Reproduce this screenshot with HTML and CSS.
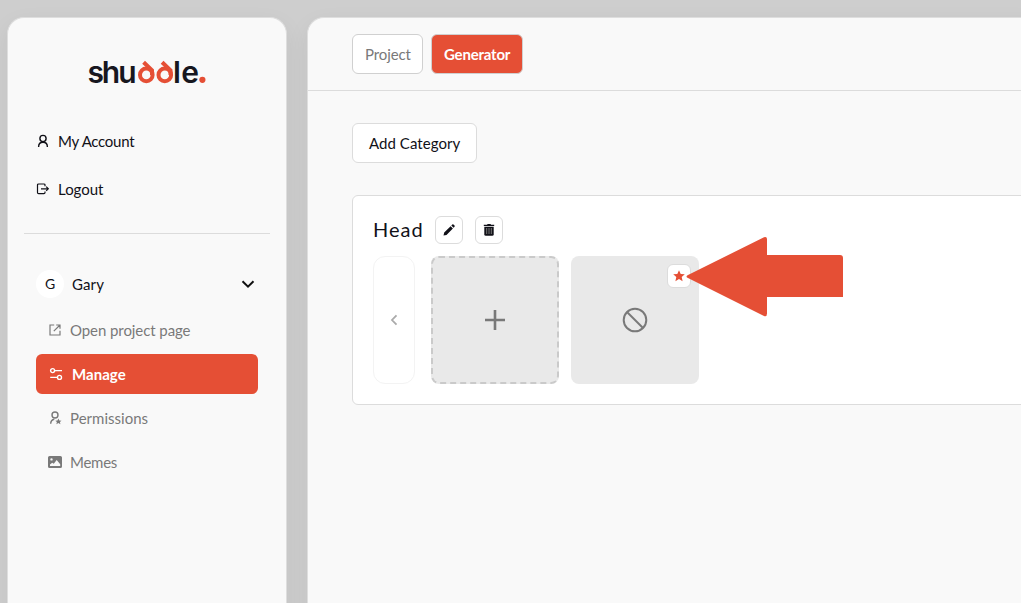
FILE: index.html
```html
<!DOCTYPE html>
<html lang="en">
<head>
<meta charset="utf-8">
<title>shuddle</title>
<link rel="stylesheet" href="styles.css">
</head>
<body>
<div class="app">
  <aside class="sidebar">
    <svg class="logo" width="120" height="38" viewBox="0 -5 120 38">
      <text class="logo-text" x="0.5" y="25" textLength="49">shu</text>
      <g class="logo-accent">
        <circle cx="59.3" cy="16.9" r="6.3"/><path d="M56.6 4.2L65 12.3V17"/>
        <circle cx="77.8" cy="16.9" r="6.3"/><path d="M75.100 4.2L83.500 12.3V17"/>
      </g>
      <text class="logo-text" x="86" y="25" textLength="26">le</text>
      <circle class="logo-dot" cx="115.4" cy="21.8" r="3.1"/>
    </svg>
    <nav class="account">
      <a class="link"><svg width="14" height="14" viewBox="0 0 14 14" class="line"><circle cx="7" cy="4.5" r="3.1"/><path d="M2.6 13c0-2.7 1.8-4.7 4.4-4.7s4.4 2 4.4 4.7"/></svg><span class="t-account">My Account</span></a>
      <a class="link"><svg width="14" height="14" viewBox="0 0 14 14" class="line thin"><path d="M9 4.2V3.1Q9 2 7.9 2H2.6Q1.5 2 1.5 3.1v7.4q0 1.1 1.1 1.1h5.3q1.1 0 1.1-1.1V9.4M5 6.8h7.2M10.2 4.7l2.1 2.1-2.1 2.1"/></svg><span class="t-logout">Logout</span></a>
    </nav>
    <section class="project">
      <div class="owner"><span class="avatar">G</span><span class="t-gary">Gary</span><svg class="chevron" width="14" height="14" viewBox="0 0 14 14"><path d="M1.5 4.3L7 9.7l5.5-5.4"/></svg></div>
      <a class="item"><svg width="14" height="14" viewBox="0 0 14 14" class="line thin"><path d="M6.2 2H2v10h10V7.8M8.2 2H12v3.8M12 2L5.8 8.2"/></svg><span class="t-open">Open project page</span></a>
      <a class="item active"><svg width="14" height="14" viewBox="0 0 14 14" class="line"><circle cx="3.6" cy="3.6" r="2"/><circle cx="10.5" cy="10.4" r="2"/><path d="M5.8 3.6H13M1.2 10.4h7.1"/></svg><span class="t-manage">Manage</span></a>
      <a class="item"><svg width="14" height="14" viewBox="0 0 14 14" class="line"><circle cx="7" cy="4" r="3"/><path d="M2.700 12.8c0-2.5 1.4-4.2 3.6-4.6"/><path class="fill" d="M10.4 7.5l.9 2 2.200.2-1.600 1.4.5 2.200-2-1.200-2 1.200.5-2.200-1.600-1.400 2.200-.2z"/></svg><span class="t-perm">Permissions</span></a>
      <a class="item"><svg width="14" height="14" viewBox="0 0 14 14"><path fill="currentColor" fill-rule="evenodd" d="M1.6 1h10.8Q14 1 14 2.6v8.8q0 1.6-1.6 1.6H1.6Q0 13 0 11.4V2.6Q0 1 1.6 1zM3.5 3.2a1.2 1.2 0 1 0 0 2.4 1.2 1.2 0 0 0 0-2.4zM2 11h10.2V9.3L8.7 5 5.8 8.8 4.2 7.7 2 9.5z"/></svg><span class="t-memes">Memes</span></a>
    </section>
  </aside>
  <main class="content">
    <header class="tabs"><button class="btn tab"><span class="t-project">Project</span></button><button class="btn tab selected"><span class="t-generator">Generator</span></button></header>
    <div class="body">
      <button class="btn add"><span class="t-add">Add Category</span></button>
      <section class="category">
        <div class="heading">
          <h2 class="t-head">Head</h2>
          <button class="icon-btn"><svg width="14" height="14" viewBox="0 0 14 14"><path d="M1.5 12.6l.7-3L8.6 3.2l2.3 2.3-6.4 6.4zM9.3 2.5l1-.9q.6-.5 1.2 0l1 1q.6.6 0 1.2l-.9 1z"/></svg></button>
          <button class="icon-btn"><svg width="14" height="14" viewBox="0 0 14 14"><path d="M1.8 1.7H5l.7-.8h2.7l.7.8h3.1v1.2H1.8z"/><path d="M2.3 3.7h9.4v7.5q0 1.5-1.5 1.5H3.8q-1.5 0-1.5-1.5z"/><path class="slots" d="M4.7 5v6M7 5v6M9.3 5v6"/></svg></button>
        </div>
        <div class="slides">
          <button class="previous"><svg width="14" height="14" viewBox="0 0 14 14"><path d="M9.5 2.3L5 7l4.5 4.7"/></svg></button>
          <div class="tile new"><svg width="24" height="24" viewBox="0 0 24 24"><path class="plus" d="M12 2v20M2 12h20"/></svg></div>
          <div class="tile">
            <svg width="28" height="28" viewBox="0 0 28 28"><circle cx="14" cy="14" r="11.3"/><path d="M6 6l16 16"/></svg>
            <span class="badge"><svg width="14" height="14" viewBox="0 0 14 14"><path d="M7 1.2l1.7 3.7 4.100.4-3.100 2.800.9 4.100-3.600-2.100-3.600 2.100.9-4.100-3.100-2.800 4.100-.4z"/></svg></span>
            <svg class="arrow" width="157" height="80" viewBox="0 0 157 80"><path d="M1.5 38.2L78 .3Q81-.5 81 2v16h73q3 0 3 3v39H81v16.500Q81 80 78 79L1.500 40.800Q-.5 39.500 1.500 38.200z"/></svg>
          </div>
        </div>
      </section>
    </div>
  </main>
</div>
</body>
</html>
```
FILE: styles.css
```css
* { box-sizing: border-box; }
body { margin: 0; background: #cecece; color: #111118; font: 15px/20px Lato, sans-serif; overflow: hidden; }
button { font: inherit; color: inherit; padding: 0; margin: 0; }
svg { display: block; flex: none; fill: none; stroke: none; }
span, h2 { white-space: nowrap; }
.app { display: flex; gap: 20px; height: 603px; padding: 17px 0 0 7px; overflow: hidden; }
.sidebar, .content { background: #f9f9f9; border: 1px solid #dedede; border-bottom: 0; box-shadow: 0 8px 24px rgba(0,0,0,.06); }
.sidebar { flex: none; width: 280px; height: 620px; border-radius: 17px; padding: 35px 16px; }
.content { flex: none; width: 740px; height: 620px; border-radius: 17px; }
.logo { margin-left: 63px; overflow: visible; }
.logo-text { font: 600 30px Inter, sans-serif; fill: #17171f; }
.logo-accent { fill: none; stroke: #e54f35; stroke-width: 4; }
.logo-dot { fill: #e54f35; }
.account { display: flex; flex-direction: column; gap: 28px; padding: 40px 12px 34px; border-bottom: 1px solid #dcdcdc; }
.link { display: flex; align-items: center; gap: 8px; height: 20px; }
.link span, .item span, .btn span, .t-gary { padding-bottom: 1px; }
.line { stroke: currentColor; stroke-width: 1.4; }
.thin { stroke-width: 1.2; }
.fill { fill: currentColor; stroke: none; }
.project { padding: 36px 12px 0; }
.owner { display: flex; align-items: center; height: 28px; gap: 8px; margin-bottom: 12px; }
.avatar { width: 28px; height: 28px; border-radius: 50%; background: #fff; text-align: center; font-size: 14px; line-height: 28px; }
.chevron { margin-left: auto; margin-right: 3px; stroke: #111; stroke-width: 2; }
.item { display: flex; align-items: center; gap: 8px; height: 40px; width: 222px; padding-left: 12px; margin-bottom: 4px; color: #797979; border-radius: 6px; }
.active { background: #e54f35; color: #fff; font-weight: 700; padding-left: 13px; gap: 9px; }
.tabs { display: flex; gap: 8px; height: 73px; padding: 16px 44px; border-bottom: 1px solid #dcdcdc; }
.btn { display: flex; align-items: center; height: 40px; background: #fff; border: 1px solid #dcdcdc; border-radius: 6px; }
.tab { width: 71px; padding-left: 12px; color: #797979; border-color: #d0d0d0; }
.selected { width: 92px; background: #e54f35; color: #fff; font-weight: 700; }
.body { padding: 32px 0 0 44px; }
.add { width: 125px; padding-left: 16px; }
.category { margin-top: 32px; width: 900px; height: 210px; border: 1px solid #dcdcdc; border-radius: 6px; background: #fff; padding: 20px; }
.heading { display: flex; gap: 12px; align-items: center; height: 28px; }
.heading h2 { margin: 0; width: 50px; font-size: 20px; line-height: 26px; padding-bottom: 2px; font-weight: 400; }
.icon-btn { display: grid; place-items: center; width: 28px; height: 28px; border: 1px solid #dcdcdc; border-radius: 6px; background: #fff; }
.icon-btn svg { fill: #111118; }
.slots { stroke: #777; stroke-width: 1; }
.slides { display: flex; margin-top: 12px; }
.previous { display: grid; place-items: center; width: 42px; height: 128px; border: 1px solid #f3f3f3; border-radius: 12px; background: #fff; margin-right: 16px; }
.previous svg { stroke: #aaa; stroke-width: 1.8; }
.tile { position: relative; display: grid; place-items: center; width: 128px; height: 128px; border-radius: 8px; background: #e9e9e9; }
.tile > svg { stroke: #797979; stroke-width: 2; }
.new { border: 2px dashed #cacaca; margin-right: 12px; }
.plus { stroke-width: 2.6; }
.badge { position: absolute; top: 8px; right: 8px; width: 24px; height: 24px; border: 1px solid #dcdcdc; border-radius: 6px; background: #fff; display: grid; place-items: center; }
.badge svg { fill: #e54f35; }
.tile > .arrow { position: absolute; left: 115px; top: -19px; fill: #e54f35; stroke: none; overflow: visible; }
.t-account { letter-spacing: -.27px; }
.t-logout { letter-spacing: -.02px; }
.t-gary { letter-spacing: .1px; }
.t-open { letter-spacing: -.08px; }
.t-manage { letter-spacing: .05px; }
.t-perm { letter-spacing: .02px; }
.t-memes { letter-spacing: -.25px; }
.t-project { letter-spacing: -.1px; }
.t-generator { letter-spacing: -.2px; }
.t-add { letter-spacing: .05px; }
.t-head { letter-spacing: 1px; }
```
